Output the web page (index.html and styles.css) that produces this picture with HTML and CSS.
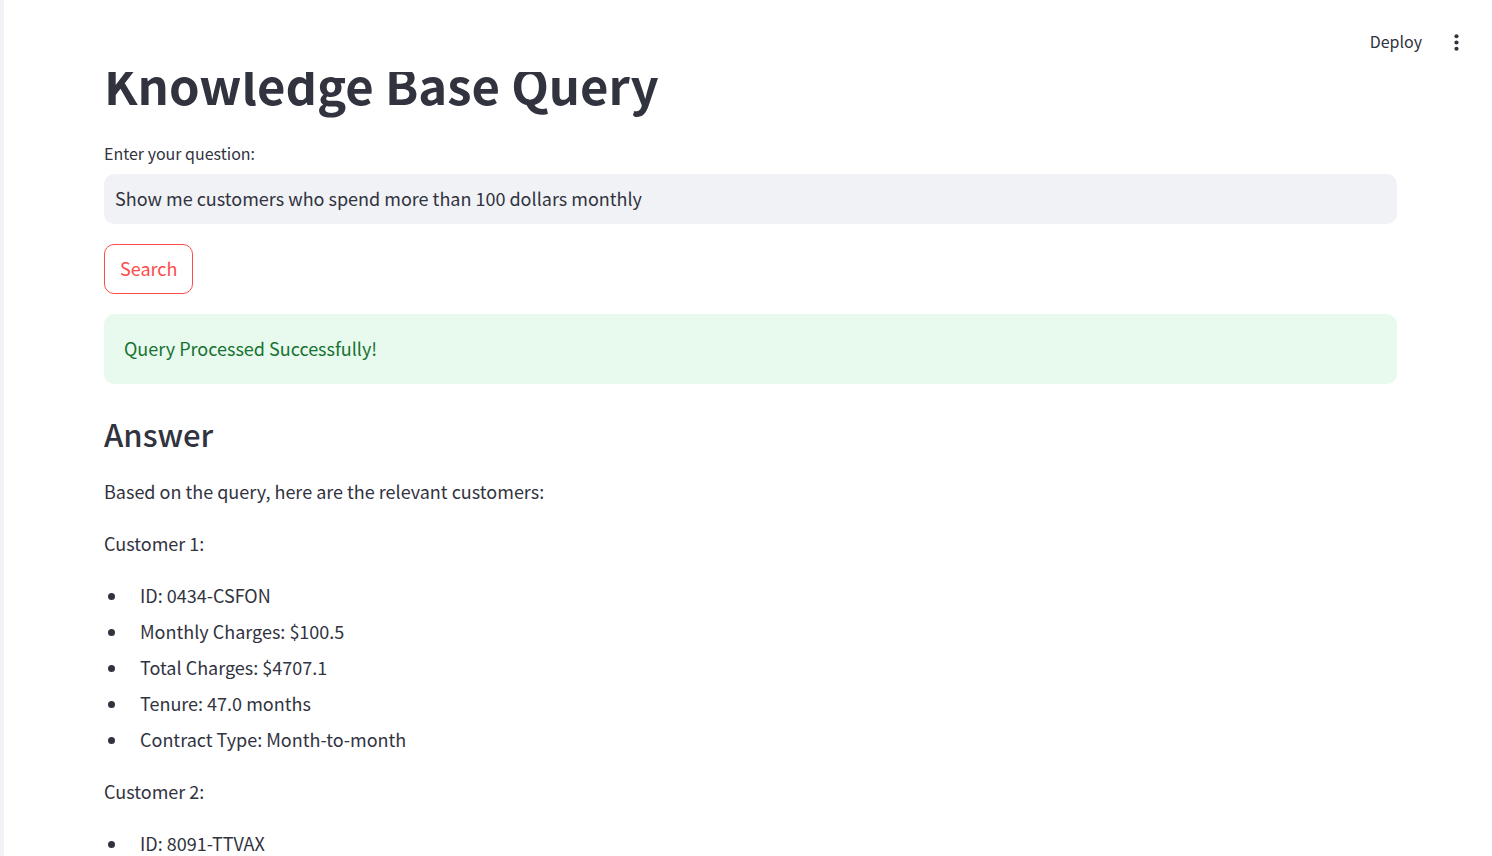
FILE: index.html
```html
<!DOCTYPE html>
<html lang="en">
<head>
<meta charset="utf-8">
<meta name="viewport" content="width=device-width, initial-scale=1">
<title>Knowledge Base Query</title>
<link rel="stylesheet" href="styles.css">
</head>
<body>
<div class="app">
  <aside class="sidebar-edge"></aside>
  <div class="page">
    <header class="toolbar">
      <button class="deploy" type="button">Deploy</button>
      <button class="menu" type="button" aria-label="Main menu">
        <svg viewBox="0 0 24 24" width="25" height="25" fill="currentColor" aria-hidden="true"><circle cx="12" cy="6" r="2"/><circle cx="12" cy="12" r="2"/><circle cx="12" cy="18" r="2"/></svg>
      </button>
    </header>
    <main class="scroll">
      <h1 class="title">Knowledge Base Query</h1>
      <form class="query">
        <label class="label" for="question">Enter your question:</label>
        <input class="field" id="question" type="text" value="Show me customers who spend more than 100 dollars monthly">
        <button class="search" type="button">Search</button>
      </form>
      <div class="success" role="status">Query Processed Successfully!</div>
      <h2 class="subtitle">Answer</h2>
      <p class="text">Based on the query, here are the relevant customers:</p>
      <p class="text">Customer 1:</p>
      <ul class="list">
        <li>ID: 0434-CSFON</li>
        <li>Monthly Charges: $100.5</li>
        <li>Total Charges: $4707.1</li>
        <li>Tenure: 47.0 months</li>
        <li>Contract Type: Month-to-month</li>
      </ul>
      <p class="text">Customer 2:</p>
      <ul class="list">
        <li>ID: 8091-TTVAX</li>
      </ul>
    </main>
  </div>
</div>
</body>
</html>
```
FILE: styles.css
```css
* { box-sizing: border-box; }

body {
  margin: 0;
  color: #31333f;
  background: #fff;
  font-family: "Noto Sans CJK SC", "Noto Sans", sans-serif;
  font-size: 18px;
  line-height: 32px;
}

button, input { font: inherit; color: inherit; }

.app { display: flex; height: 100vh; overflow: hidden; }
.sidebar-edge { flex: none; width: 4px; background: #f0f2f6; }
.page { flex: 1; min-width: 0; display: flex; flex-direction: column; }

.toolbar {
  flex: none;
  display: flex;
  align-items: center;
  justify-content: flex-end;
  gap: 22px;
  height: 72px;
  padding: 12px 23px 0 0;
}
.deploy, .menu { display: flex; align-items: center; padding: 0; border: 0; background: none; }
.deploy { padding-bottom: 2px; font-size: 16px; }

.scroll {
  flex: 1;
  min-height: 0;
  overflow: hidden;
  padding: 0 95px 0 100px;
}

.title { margin: -24px 0 0; font-size: 49px; font-weight: 700; line-height: 72px; }
.query { display: flex; flex-direction: column; align-items: flex-start; margin-top: 19px; }
.label { font-size: 16px; line-height: 28px; }
.field {
  width: 100%;
  height: 50px;
  margin-top: 7px;
  padding: 0 11px 2px;
  border: 0;
  border-radius: 10px;
  outline: 0;
  background: #f0f2f6;
}
.search {
  height: 50px;
  margin: 20px 0;
  padding: 0 15px 2px;
  border: 1px solid #ff4b4b;
  border-radius: 10px;
  background: #fff;
  color: #ff4b4b;
}
.success { padding: 18px 20px 20px; border-radius: 10px; background: #e8f9ee; color: #177233; }
.subtitle { margin: 28px 0 19px; font-size: 31px; font-weight: 500; line-height: 44px; }
.text { margin: 0 0 20px; }

.list { margin: 0 0 20px; padding: 0; list-style: none; }
.list li { display: flex; align-items: center; gap: 25px; padding-left: 4px; margin-bottom: 4px; }
.list li:last-child { margin-bottom: 0; }
.list li::before { content: ""; width: 7px; height: 7px; margin-top: 3px; border-radius: 50%; background: currentColor; }
```
